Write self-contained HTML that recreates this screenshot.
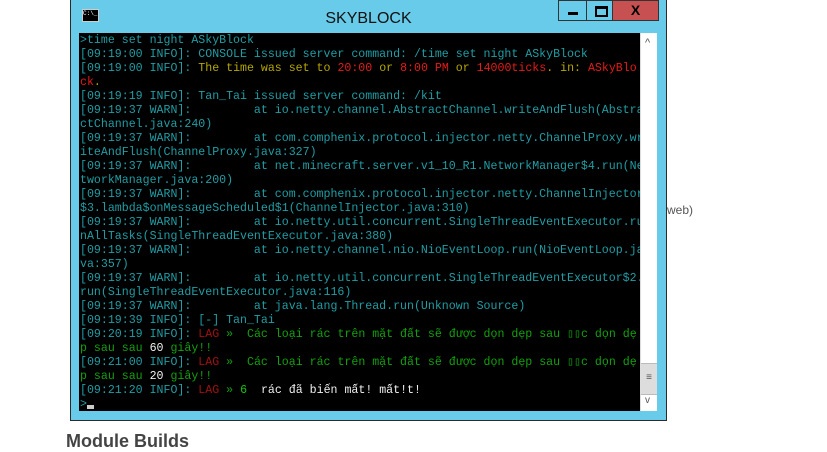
<!DOCTYPE html>
<html><head><meta charset="utf-8"><style>
body{margin:0;width:827px;height:450px;background:#fff;position:relative;overflow:hidden;font-family:"Liberation Sans",sans-serif}
.win{position:absolute;left:70px;top:-1px;width:595px;height:420px;background:#67cbe9;border:1px solid #2b2b2b}
.title{position:absolute;left:0;right:0;top:10px;text-align:center;font-size:16px;color:#111}
.icon{position:absolute;left:11px;top:9px;width:15px;height:11px;background:#000;border:1px solid #ccc;font:6px "Liberation Mono",monospace;color:#fff;line-height:8px}
.btn{position:absolute;top:0;height:21px;border:1px solid #333;box-sizing:border-box}
.con{position:absolute;left:8px;top:33px;width:561px;height:378px;background:#000;overflow:hidden}
.con div{position:absolute;left:1px;top:1px;height:14px;white-space:pre;font:11.6px/14px "Liberation Mono","DejaVu Sans Mono",monospace;color:#1f9ea5}
.sb{position:absolute;left:569px;top:33px;width:17px;height:378px;background:#fff;border-left:1px solid #ddd;box-sizing:border-box}
.y{color:#b5a700}.r{color:#e81a1a}.g{color:#13a10e}.dr{color:#a41111}.w{color:#f0f0f0}.lg{color:#16c60c}
</style></head><body>
<div class="win">
<div class="icon">C:\_</div>
<div class="title">SKYBLOCK</div>
<div class="btn" style="left:487px;width:29px"><div style="position:absolute;left:9px;top:11px;width:10px;height:3px;background:#000"></div></div>
<div class="btn" style="left:515px;width:27px"><div style="position:absolute;left:8px;top:5px;width:9px;height:6px;border:2px solid #000;border-top-width:3px"></div></div>
<div class="btn" style="left:541px;width:47px;background:#c75050;font:bold 14px/19px 'Liberation Sans',sans-serif;text-align:center;color:#000">X</div>
<div class="con">
<div style="top:1px">&gt;time set night ASkyBlock</div>
<div style="top:15px">[09:19:00 INFO]: CONSOLE issued server command: /time set night ASkyBlock</div>
<div style="top:29px">[09:19:00 INFO]: <span class="y">The time was set to </span><span class="r">20:00</span><span class="y"> or </span><span class="r">8:00 PM</span><span class="y"> or </span><span class="r">14000ticks</span><span class="y">. in: </span><span class="r">ASkyBlo</span></div>
<div style="top:43px"><span class="r">ck</span><span class="y">.</span></div>
<div style="top:57px">[09:19:19 INFO]: Tan_Tai issued server command: /kit</div>
<div style="top:71px">[09:19:37 WARN]:         at io.netty.channel.AbstractChannel.writeAndFlush(Abstra</div>
<div style="top:85px">ctChannel.java:240)</div>
<div style="top:99px">[09:19:37 WARN]:         at com.comphenix.protocol.injector.netty.ChannelProxy.wr</div>
<div style="top:113px">iteAndFlush(ChannelProxy.java:327)</div>
<div style="top:127px">[09:19:37 WARN]:         at net.minecraft.server.v1_10_R1.NetworkManager$4.run(Ne</div>
<div style="top:141px">tworkManager.java:200)</div>
<div style="top:155px">[09:19:37 WARN]:         at com.comphenix.protocol.injector.netty.ChannelInjector</div>
<div style="top:169px">$3.lambda$onMessageScheduled$1(ChannelInjector.java:310)</div>
<div style="top:183px">[09:19:37 WARN]:         at io.netty.util.concurrent.SingleThreadEventExecutor.ru</div>
<div style="top:197px">nAllTasks(SingleThreadEventExecutor.java:380)</div>
<div style="top:211px">[09:19:37 WARN]:         at io.netty.channel.nio.NioEventLoop.run(NioEventLoop.ja</div>
<div style="top:225px">va:357)</div>
<div style="top:239px">[09:19:37 WARN]:         at io.netty.util.concurrent.SingleThreadEventExecutor$2.</div>
<div style="top:253px">run(SingleThreadEventExecutor.java:116)</div>
<div style="top:267px">[09:19:37 WARN]:         at java.lang.Thread.run(Unknown Source)</div>
<div style="top:281px">[09:19:39 INFO]: [-] Tan_Tai</div>
<div style="top:295px">[09:20:19 INFO]: <span class="dr">LAG</span> <span class="g">»  Các loại rác trên mặt đất sẽ được dọn dẹp sau ▯▯c dọn dẹ</span></div>
<div style="top:309px"><span class="g">p sau sau </span><span class="w">60</span><span class="g"> giây!!</span></div>
<div style="top:323px">[09:21:00 INFO]: <span class="dr">LAG</span> <span class="g">»  Các loại rác trên mặt đất sẽ được dọn dẹp sau ▯▯c dọn dẹ</span></div>
<div style="top:337px"><span class="g">p sau sau </span><span class="w">20</span><span class="g"> giây!!</span></div>
<div style="top:351px">[09:21:20 INFO]: <span class="dr">LAG</span> <span class="g">»</span> <span class="lg">6</span>  <span class="w">rác đã biến mất! mất!t!</span></div>
<div style="top:365px">&gt;<span style="display:inline-block;width:7px;height:4px;background:#ccc;vertical-align:-2px"></span></div>
</div>
<div class="sb">
<div style="position:absolute;left:4px;top:4px;font-size:11px;color:#555">^</div>
<div style="position:absolute;left:0;top:330px;width:16px;height:30px;background:#ddd;border-top:1px solid #bbb;border-bottom:1px solid #bbb;text-align:center;font-size:10px;line-height:28px;color:#555">≡</div>
<div style="position:absolute;left:4px;top:362px;font-size:10px;color:#555">v</div>
</div>
</div>
<div style="position:absolute;left:667px;top:203px;font-size:12px;color:#555">web)</div>
<div style="position:absolute;left:66px;top:431px;font-size:18px;font-weight:bold;color:#444">Module Builds</div>
</body></html>
